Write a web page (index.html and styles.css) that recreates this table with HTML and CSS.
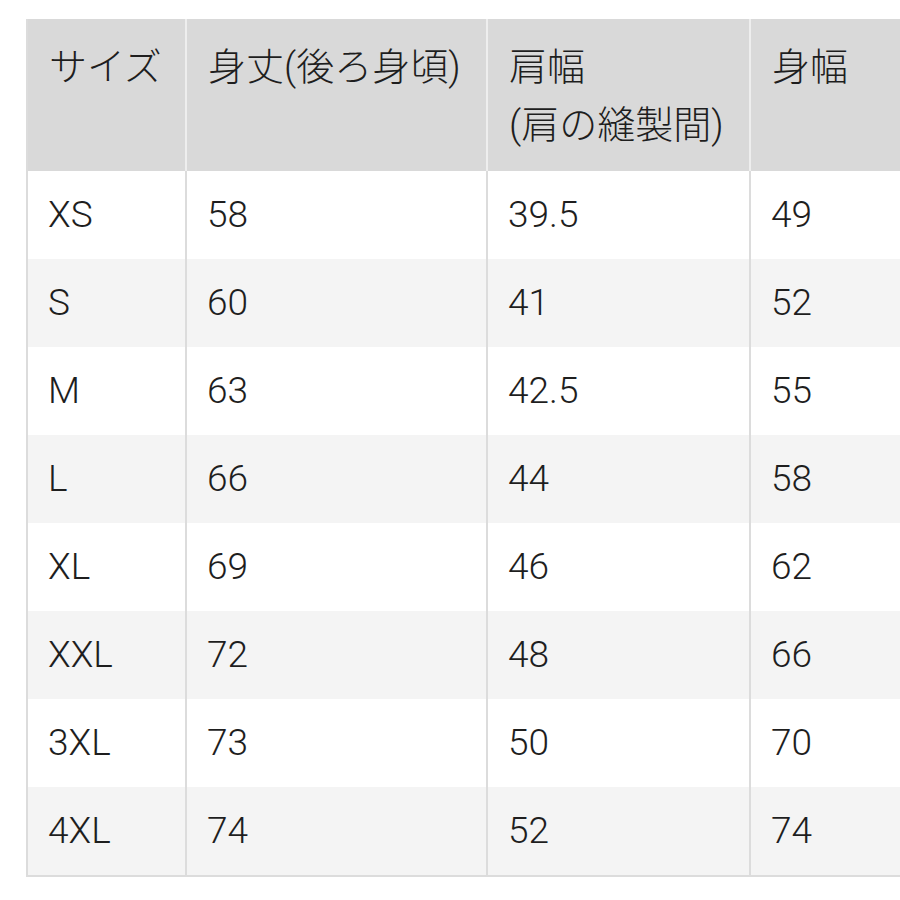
FILE: index.html
```html
<!DOCTYPE html>
<html lang="ja">
<head>
<meta charset="utf-8">
<link rel="stylesheet" href="styles.css">
</head>
<body>
<div class="table">
  <div class="row head">
    <div class="cell">サイズ</div>
    <div class="cell">身丈(後ろ身頃)</div>
    <div class="cell">肩幅<br>(肩の縫製間)</div>
    <div class="cell">身幅</div>
  </div>
  <div class="row"><div class="cell">XS</div><div class="cell">58</div><div class="cell">39.5</div><div class="cell">49</div></div>
  <div class="row"><div class="cell">S</div><div class="cell">60</div><div class="cell">41</div><div class="cell">52</div></div>
  <div class="row"><div class="cell">M</div><div class="cell">63</div><div class="cell">42.5</div><div class="cell">55</div></div>
  <div class="row"><div class="cell">L</div><div class="cell">66</div><div class="cell">44</div><div class="cell">58</div></div>
  <div class="row"><div class="cell">XL</div><div class="cell">69</div><div class="cell">46</div><div class="cell">62</div></div>
  <div class="row"><div class="cell">XXL</div><div class="cell">72</div><div class="cell">48</div><div class="cell">66</div></div>
  <div class="row"><div class="cell">3XL</div><div class="cell">73</div><div class="cell">50</div><div class="cell">70</div></div>
  <div class="row"><div class="cell">4XL</div><div class="cell">74</div><div class="cell">52</div><div class="cell">74</div></div>
</div>
</body>
</html>
```
FILE: styles.css
```css
html, body {
  margin: 0;
  padding: 0;
  background: #ffffff;
  overflow: hidden;
}
body {
  font-family: Roboto, "Noto Sans CJK JP", sans-serif;
  font-size: 37px;
  font-weight: 300;
  color: #1e1e1e;
}
.table {
  margin: 19px 0 0 26px;
  width: 990px;
  border-left: 2px solid #dcdcdc;
  border-bottom: 2px solid #dcdcdc;
}
.row {
  display: grid;
  grid-template-columns: 157px 301px 263px 263px;
  height: 88px;
}
.row:nth-child(odd) {
  background: #f4f4f4;
}
.row.head {
  height: 152px;
  background: #d9d9d9;
}
.cell {
  box-sizing: border-box;
  padding: 0 0 0 20px;
  display: flex;
  align-items: center;
  line-height: 58px;
}
.cell + .cell {
  border-left: 2px solid #dcdcdc;
}
.head .cell {
  display: block;
  padding-top: 19px;
  padding-left: 21px;
  font-size: 38px;
  line-height: 58px;
}
.head .cell + .cell {
  border-left-color: #eeeeee;
}
```
